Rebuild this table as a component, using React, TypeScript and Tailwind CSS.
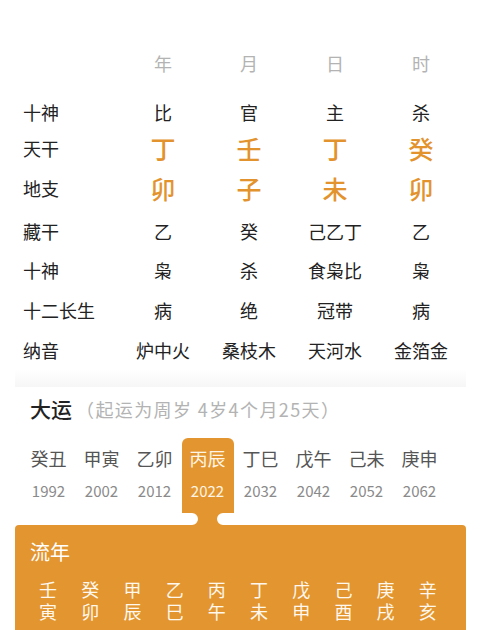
import React from "react";

const FONT = { fontFamily: '"Noto Sans CJK SC", "Noto Sans", sans-serif' };

const cols = ["年", "月", "日", "时"];

type Row = { label: string; vals: string[]; h: string; kind: "dark" | "orange" };

const rows: Row[] = [
  { label: "十神", vals: ["比", "官", "主", "杀"], h: "h-[40px]", kind: "dark" },
  { label: "天干", vals: ["丁", "壬", "丁", "癸"], h: "h-[32px]", kind: "orange" },
  { label: "地支", vals: ["卯", "子", "未", "卯"], h: "h-[48px]", kind: "orange" },
  { label: "藏干", vals: ["乙", "癸", "己乙丁", "乙"], h: "h-[38px]", kind: "dark" },
  { label: "十神", vals: ["枭", "杀", "食枭比", "枭"], h: "h-[40px]", kind: "dark" },
  { label: "十二长生", vals: ["病", "绝", "冠带", "病"], h: "h-[40px]", kind: "dark" },
  { label: "纳音", vals: ["炉中火", "桑枝木", "天河水", "金箔金"], h: "h-[40px]", kind: "dark" },
];

const dayun = [
  ["癸丑", "1992"],
  ["甲寅", "2002"],
  ["乙卯", "2012"],
  ["丙辰", "2022"],
  ["丁巳", "2032"],
  ["戊午", "2042"],
  ["己未", "2052"],
  ["庚申", "2062"],
];

const liunian = [
  ["壬", "寅"],
  ["癸", "卯"],
  ["甲", "辰"],
  ["乙", "巳"],
  ["丙", "午"],
  ["丁", "未"],
  ["戊", "申"],
  ["己", "酉"],
  ["庚", "戌"],
  ["辛", "亥"],
];

export default function App() {
  return (
    <div className="w-[481px] h-[630px] overflow-hidden bg-white" style={FONT}>
      {/* Pillars card */}
      <div className="mx-[15px] pt-[43px]">
        <div className="grid grid-cols-[105px_repeat(4,86px)] h-[40px] items-center">
          <div />
          {cols.map((c) => (
            <div key={c} className="text-center text-[18px] text-[#b3b3b3]">
              {c}
            </div>
          ))}
        </div>
        <div className="h-[9px]" />
        {rows.map((r, i) => (
          <div key={i} className={`grid grid-cols-[105px_repeat(4,86px)] items-center ${r.h}`}>
            <div className="pl-[8px] text-[18px] text-[#222222] leading-none">{r.label}</div>
            {r.vals.map((v, j) => (
              <div
                key={j}
                className={
                  r.kind === "orange"
                    ? "text-center text-[25px] leading-none text-[#e3932d] font-medium"
                    : "text-center text-[18px] leading-none text-[#222222]"
                }
              >
                {v}
              </div>
            ))}
          </div>
        ))}
        <div className="h-[17px] bg-gradient-to-b from-white to-[#f6f6f6]" />
      </div>

      {/* 大运 header */}
      <div className="flex items-center h-[44px] pl-[30px]">
        <span className="text-[21px] font-medium text-[#222222]">大运</span>
        <span className="ml-[4px] text-[18px] tracking-[1.4px] text-[#b3b3b3]">（起运为周岁 4岁4个月25天）</span>
      </div>

      {/* 大运 list */}
      <div className="flex pl-[22px] mt-[7px]">
        {dayun.map(([g, y], i) => {
          const active = i === 3;
          return (
            <div key={i} className="relative w-[53px] h-[75px] flex justify-center">
              <div
                className={
                  active
                    ? "w-[52px] h-[75px] rounded-t-[6px] bg-[#e3952f] flex flex-col items-center"
                    : "w-[52px] h-[75px] flex flex-col items-center"
                }
              >
                <div
                  className={
                    active
                      ? "mt-[8px] h-[24px] leading-[24px] text-[18px] text-[#fff5e6]"
                      : "mt-[8px] h-[24px] leading-[24px] text-[18px] text-[#555555]"
                  }
                >
                  {g}
                </div>
                <div
                  className={
                    active
                      ? "mt-[11px] h-[20px] leading-[20px] text-[15px] text-[#fff5e6]"
                      : "mt-[11px] h-[20px] leading-[20px] text-[15px] text-[#8a8a8a]"
                  }
                >
                  {y}
                </div>
              </div>
              {active && (
                <svg
                  className="absolute left-[11px] top-[74px]"
                  width="31"
                  height="14"
                  viewBox="0 0 31 14"
                >
                  <path d="M0 0 H31 V1 A6 6 0 0 0 31 13 V14 H0 V13 A6 6 0 0 0 0 1 Z" fill="#e3952f" />
                </svg>
              )}
            </div>
          );
        })}
      </div>

      {/* 流年 panel */}
      <div className="mx-[15px] mt-[12px] h-[110px] rounded-t-[4px] bg-[#e3952f]">
        <div className="pl-[15px] pt-[13px] text-[20px] leading-[28px] text-white">流年</div>
        <div className="flex pl-[12px] mt-[12px]">
          {liunian.map(([a, b], i) => (
            <div
              key={i}
              className="w-[42.2px] flex flex-col items-center text-[18px] leading-[22px] text-[#fff8ee]"
            >
              <span>{a}</span>
              <span>{b}</span>
            </div>
          ))}
        </div>
      </div>
    </div>
  );
}
